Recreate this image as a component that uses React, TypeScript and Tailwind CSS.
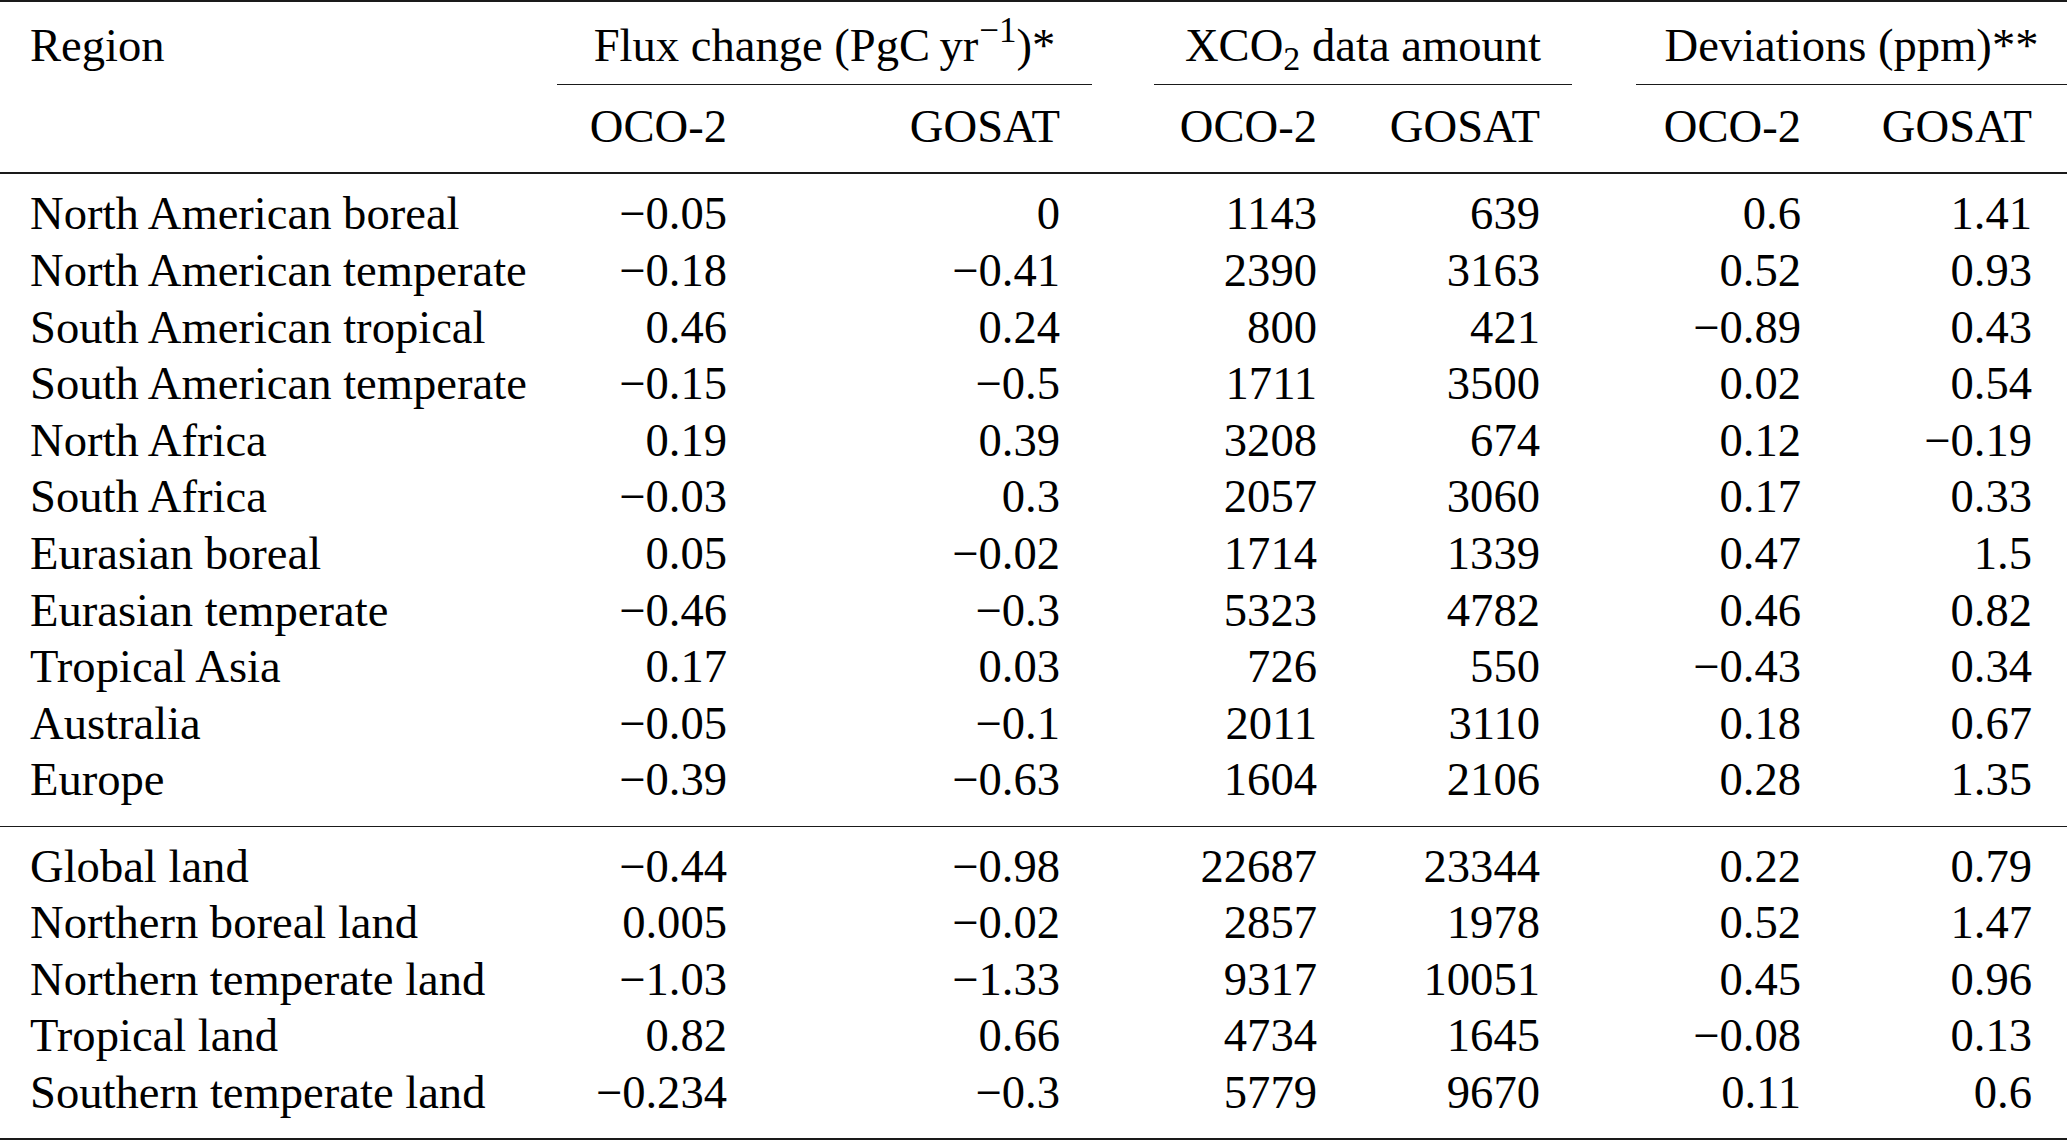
import React from "react";

type Row = [string, string, string, string, string, string, string];

const regions: Row[] = [
  ["North American boreal", "−0.05", "0", "1143", "639", "0.6", "1.41"],
  ["North American temperate", "−0.18", "−0.41", "2390", "3163", "0.52", "0.93"],
  ["South American tropical", "0.46", "0.24", "800", "421", "−0.89", "0.43"],
  ["South American temperate", "−0.15", "−0.5", "1711", "3500", "0.02", "0.54"],
  ["North Africa", "0.19", "0.39", "3208", "674", "0.12", "−0.19"],
  ["South Africa", "−0.03", "0.3", "2057", "3060", "0.17", "0.33"],
  ["Eurasian boreal", "0.05", "−0.02", "1714", "1339", "0.47", "1.5"],
  ["Eurasian temperate", "−0.46", "−0.3", "5323", "4782", "0.46", "0.82"],
  ["Tropical Asia", "0.17", "0.03", "726", "550", "−0.43", "0.34"],
  ["Australia", "−0.05", "−0.1", "2011", "3110", "0.18", "0.67"],
  ["Europe", "−0.39", "−0.63", "1604", "2106", "0.28", "1.35"],
];

const totals: Row[] = [
  ["Global land", "−0.44", "−0.98", "22687", "23344", "0.22", "0.79"],
  ["Northern boreal land", "0.005", "−0.02", "2857", "1978", "0.52", "1.47"],
  ["Northern temperate land", "−1.03", "−1.33", "9317", "10051", "0.45", "0.96"],
  ["Tropical land", "0.82", "0.66", "4734", "1645", "−0.08", "0.13"],
  ["Southern temperate land", "−0.234", "−0.3", "5779", "9670", "0.11", "0.6"],
];

const cols = "grid grid-cols-[580px_147px_333px_257px_223px_261px_231px] h-[56.6px] leading-[56.6px]";

function DataRow({ row }: { row: Row }) {
  return (
    <div className={cols}>
      <div className="pl-[30px] whitespace-nowrap">{row[0]}</div>
      {row.slice(1).map((v, i) => (
        <div key={i} className="text-right whitespace-nowrap">
          {v}
        </div>
      ))}
    </div>
  );
}

export default function App() {
  return (
    <div
      className="w-[2067px] h-[1142px] bg-white text-black text-[46.6px] overflow-hidden"
      style={{ fontFamily: '"Liberation Serif", "Times New Roman", serif' }}
    >
      {/* top rule */}
      <div className="border-t-2 border-[#1a1a1a]" />

      {/* group headers */}
      <div className="flex pt-[15.4px]">
        <div className="w-[557px] pl-[30px] h-[56.6px] leading-[56.6px]">Region</div>
        <div className="w-[535px] flex flex-col">
          <div className="h-[56.6px] leading-[56.6px] text-center whitespace-nowrap">
            Flux change (PgC&#8201;yr<sup className="text-[35px] -top-[0.55em] ml-[1px]">−1</sup>)*
          </div>
          <div className="mt-[10px] border-t-[1.5px] border-[#1a1a1a]" />
        </div>
        <div className="w-[62px]" />
        <div className="w-[418px] flex flex-col">
          <div className="h-[56.6px] leading-[56.6px] text-center whitespace-nowrap">
            XCO<sub className="text-[34px]">2</sub> data amount
          </div>
          <div className="mt-[10px] border-t-[1.5px] border-[#1a1a1a]" />
        </div>
        <div className="w-[64px]" />
        <div className="w-[431px] flex flex-col">
          <div className="h-[56.6px] leading-[56.6px] text-center whitespace-nowrap">
            Deviations (ppm)**
          </div>
          <div className="mt-[10px] border-t-[1.5px] border-[#1a1a1a]" />
        </div>
      </div>

      {/* sub headers */}
      <div className={cols + " mt-[12.9px]"}>
        <div />
        <div className="text-right">OCO-2</div>
        <div className="text-right">GOSAT</div>
        <div className="text-right">OCO-2</div>
        <div className="text-right">GOSAT</div>
        <div className="text-right">OCO-2</div>
        <div className="text-right">GOSAT</div>
      </div>

      <div className="mt-[18px] border-t-2 border-[#1a1a1a]" />

      <div className="pt-[11px]">
        {regions.map((r) => (
          <DataRow key={r[0]} row={r} />
        ))}
      </div>

      <div className="mt-[18px] border-t-[1.5px] border-[#1a1a1a]" />

      <div className="pt-[10.5px]">
        {totals.map((r) => (
          <DataRow key={r[0]} row={r} />
        ))}
      </div>

      <div className="mt-[17.5px] border-t-2 border-[#1a1a1a]" />
    </div>
  );
}
